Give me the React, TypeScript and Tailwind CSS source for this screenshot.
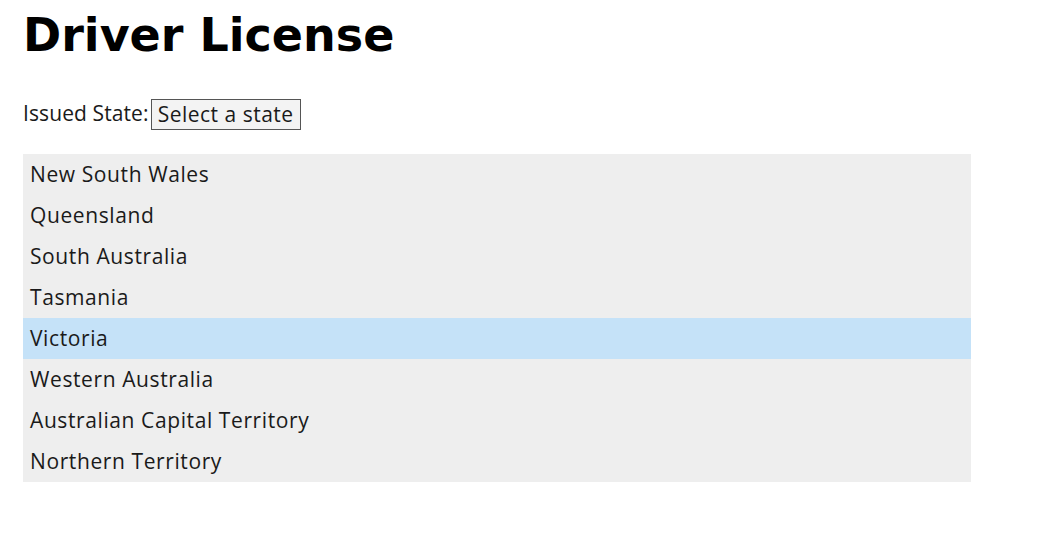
const STATES = [
  "New South Wales",
  "Queensland",
  "South Australia",
  "Tasmania",
  "Victoria",
  "Western Australia",
  "Australian Capital Territory",
  "Northern Territory",
];

export default function App() {
  return (
    <div className="min-h-[552px] bg-white px-[23px] pt-[7px] font-['Open_Sans',sans-serif] text-[#1a1a1a]">
      <h1 className="font-['DejaVu_Sans',sans-serif] text-[46px] font-bold leading-[56px] text-black">
        Driver License
      </h1>
      <div className="mt-[34px] flex items-center h-[34px]">
        <span className="text-[21px] font-medium tracking-[0.1px]">Issued State:</span>
        <div className="ml-[2px] h-[31px] flex items-center border border-[#555] bg-[#f3f3f3] px-[6px] text-[21px] font-medium tracking-[0.5px] leading-none">
          Select a state
        </div>
      </div>
      <ul className="mt-[23px] w-[948px] bg-[#eeeeee]">
        {STATES.map((s) => (
          <li
            key={s}
            className={`h-[41px] flex items-center px-[7px] text-[21px] font-medium tracking-[0.6px] ${
              s === "Victoria" ? "bg-[#c5e2f8]" : ""
            }`}
          >
            {s}
          </li>
        ))}
      </ul>
    </div>
  );
}
